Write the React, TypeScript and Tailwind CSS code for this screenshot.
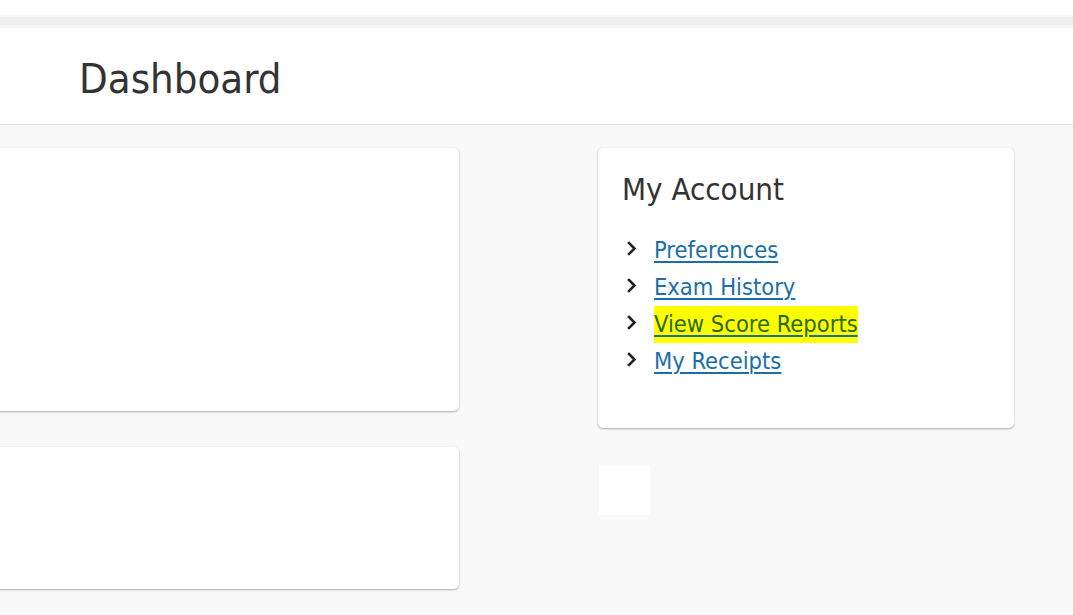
import React from "react";

const font = { fontFamily: '"DejaVu Sans Condensed", "DejaVu Sans", Verdana, sans-serif' };

function Chevron() {
  return (
    <svg width="10" height="15" viewBox="0 0 10 15" className="mt-[9px] shrink-0">
      <path d="M2 2 L7.5 7.5 L2 13" fill="none" stroke="#222" strokeWidth="2.6" strokeLinecap="square" />
    </svg>
  );
}

const links = ["Preferences", "Exam History", "View Score Reports", "My Receipts"];

export default function App() {
  return (
    <div className="min-h-[615px] w-[1073px] overflow-hidden bg-[#f9f9f9] text-[#333]" style={font}>
      {/* top strip */}
      <div className="h-[15px] bg-white" />
      <div className="h-[2px] bg-[#f6f6f6]" />
      <div className="h-[8px] bg-[#eeeeee]" />
      <div className="h-[3px] bg-[#f7f7f7]" />

      {/* header */}
      <header className="h-[97px] bg-white border-b border-[#e2e2e2] pl-[79px] pt-[30px]">
        <h1 className="text-[41.5px] leading-none text-[#333]">Dashboard</h1>
      </header>

      {/* main */}
      <main className="flex gap-[139px] pt-[23px] -ml-[30px]">
        <div className="w-[489px] flex flex-col gap-[36px]">
          <div className="h-[263px] rounded-[5px] bg-white shadow-[0_1px_2px_rgba(0,0,0,0.3),0_0_1px_rgba(0,0,0,0.1)]" />
          <div className="h-[142px] rounded-[5px] bg-white shadow-[0_1px_2px_rgba(0,0,0,0.3),0_0_1px_rgba(0,0,0,0.1)]" />
        </div>

        <div className="w-[416px] flex flex-col gap-[37px]">
          <section className="h-[280px] rounded-[5px] bg-white px-[24px] pt-[26px] shadow-[0_1px_2px_rgba(0,0,0,0.3),0_0_1px_rgba(0,0,0,0.1)]">
            <h2 className="text-[31px] leading-none text-[#333]">My Account</h2>
            <ul className="mt-[27px] pl-[5px]">
              {links.map((l) => (
                <li key={l} className="flex items-start gap-[17px] text-[23.5px] leading-[37px]">
                  <Chevron />
                  {l === "View Score Reports" ? (
                    <a
                      href="#"
                      className="bg-[#ffff00] text-[#286a08] underline decoration-[#1b6ea8] decoration-[1.5px] underline-offset-[3px]"
                    >
                      {l}
                    </a>
                  ) : (
                    <a
                      href="#"
                      className="text-[#1b6ea8] underline decoration-[1.5px] underline-offset-[3px]"
                    >
                      {l}
                    </a>
                  )}
                </li>
              ))}
            </ul>
          </section>
          <div className="ml-[1px] h-[50px] w-[51px] bg-white" />
        </div>
      </main>
    </div>
  );
}
